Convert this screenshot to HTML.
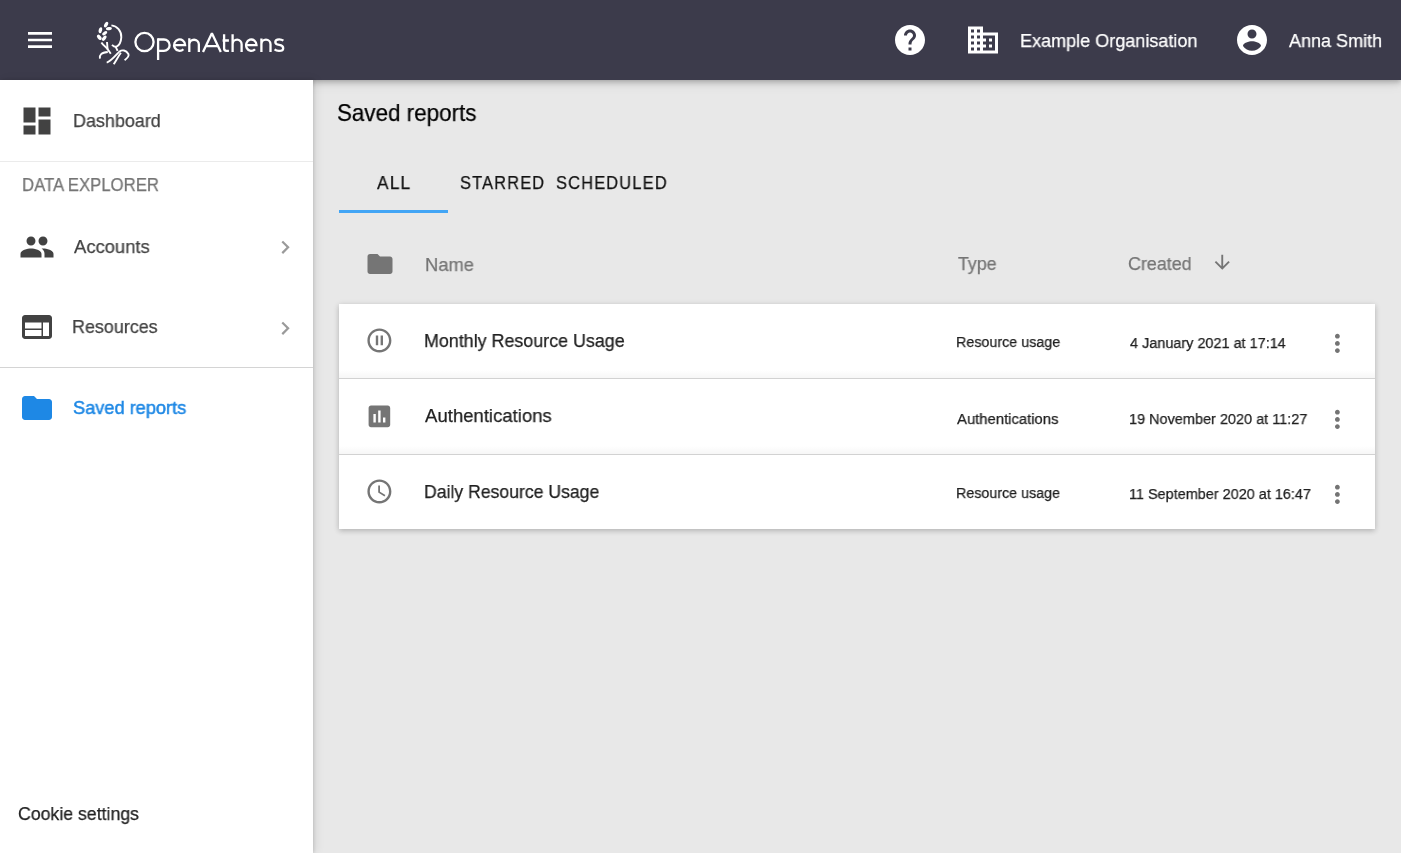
<!DOCTYPE html>
<html><head><meta charset="utf-8"><title>Saved reports</title>
<style>
html,body{margin:0;padding:0}
body{width:1401px;height:853px;overflow:hidden;position:relative;font-family:"Liberation Sans",sans-serif;background:#e8e8e8}
.t{position:absolute;white-space:nowrap;font-family:"Liberation Sans",sans-serif;transform-origin:0 0;will-change:transform}
.ab{position:absolute}
svg{display:block}
#main{position:absolute;left:313px;top:80px;width:1088px;height:773px;background:#e8e8e8}
#header{position:absolute;left:0;top:0;width:1401px;height:80px;background:#3c3b4b;box-shadow:0 2px 4px -1px rgba(0,0,0,.16),0 4px 5px 0 rgba(0,0,0,.1),0 2px 13px 0 rgba(0,0,0,.1)}
#sidebar{position:absolute;left:0;top:80px;width:313px;height:773px;background:#fff;box-shadow:1px 0 3px rgba(0,0,0,.12),3px 0 9px rgba(0,0,0,.08)}
#card{position:absolute;left:339px;top:304px;width:1036px;height:225px;background:#fff;box-shadow:0 2px 5px rgba(0,0,0,.16),0 1px 7px rgba(0,0,0,.09)}
.div{position:absolute;height:1px}
.rowsh{position:absolute;left:339px;width:1036px;height:8px;background:linear-gradient(rgba(0,0,0,0),rgba(0,0,0,.035))}
</style></head>
<body>
<div id="main"></div>
<div id="header"></div>
<div id="sidebar"></div>

<!-- header icons -->
<svg class="ab" style="left:24px;top:24px" width="32" height="32" viewBox="0 0 24 24"><path fill="#fff" d="M3 18h18v-2H3v2zm0-5h18v-2H3v2zm0-7v2h18V6H3z"/></svg>

<svg class="ab" style="left:90px;top:15px" width="200" height="55" viewBox="90 15 200 55">
 <g fill="#fff">
  <ellipse cx="106.1" cy="24.6" rx="1.7" ry="3.0" transform="rotate(30 106.1 24.6)"/>
  <ellipse cx="108.9" cy="28.7" rx="3.0" ry="1.6" transform="rotate(-8 108.9 28.7)"/>
  <ellipse cx="100.4" cy="30.2" rx="1.7" ry="3.1" transform="rotate(12 100.4 30.2)"/>
  <ellipse cx="104.7" cy="33.2" rx="2.9" ry="1.6" transform="rotate(-35 104.7 33.2)"/>
  <ellipse cx="99.3" cy="37.3" rx="1.8" ry="3.0" transform="rotate(-38 99.3 37.3)"/>
  <ellipse cx="104.2" cy="38.2" rx="1.7" ry="3.0" transform="rotate(38 104.2 38.2)"/>
 </g>
 <g fill="none" stroke="#fff" stroke-width="1.9" stroke-linecap="butt">
  <path d="M101.4 42.4 C103 45 105 46.5 106.7 48 L110.8 53.8"/>
  <path d="M107 42 L107.6 49.5"/>
  <path d="M99.9 58.6 C99.4 55 101 52.6 107.8 52"/>
  <path d="M111.4 25.4 C117 26 121.6 31 121.3 37.4 C121 42 119 45.5 116.5 46.6 C114.5 47.2 113 45.8 112 44.8"/>
  <path d="M115.6 46.6 L117.6 50.8"/>
  <path d="M106.7 62.6 C111 61.5 116 55 119.6 51.4 C122 49.6 126 50 128.4 54 C129.3 56 127 58.4 124.6 60.2"/>
  <path d="M113.7 64.3 C116 61 118.5 56 120.9 52.8"/>
 </g>
 <g fill="none" stroke="#fff" stroke-width="2.3">
  <ellipse cx="144.5" cy="42.05" rx="9.1" ry="9.15"/>
  <path d="M158.1 38.3 V60"/>
  <path d="M158.1 39.5 H163.95 A5.65 5.65 0 0 1 163.95 50.8 H158.1"/>
  <path d="M174.1 45.1 H185.1 A5.5 5.7 0 1 0 183.4 49.2"/>
  <path d="M189.3 52 V38.3 M189.3 44.3 A4.78 4.78 0 0 1 198.85 44.3 V52"/>
  <path stroke-linejoin="bevel" d="M203 52 L211.9 33.2 L220.8 52 M205.8 46.1 H218"/>
  <path d="M224.1 34.2 V48.6 Q224.1 50.85 226.4 50.85 H228.9 M222.6 40.5 H228.9"/>
  <path d="M232.6 34.2 V52 M232.6 44.2 A4.5 4.5 0 0 1 241.6 44.2 V52"/>
  <path d="M246.1 45.1 H256.5 A5.2 5.7 0 1 0 255 49.2"/>
  <path d="M261.4 52 V38.5 M261.4 44.2 A4.55 4.55 0 0 1 270.5 44.2 V52"/>
  <path d="M283.4 40.6 Q281.6 39.3 279.2 39.3 Q275.3 39.3 275.3 42 Q275.3 44.4 279.2 44.9 Q283.2 45.4 283.2 48.2 Q283.2 50.9 279 50.9 Q276.2 50.9 274.6 49.4"/>
 </g>
</svg>

<svg class="ab" style="left:891.5px;top:22px" width="36" height="36" viewBox="0 0 24 24"><path fill="#fff" d="M12 2C6.48 2 2 6.48 2 12s4.48 10 10 10 10-4.48 10-10S17.52 2 12 2zm1 17h-2v-2h2v2zm2.07-7.75l-.9.92C13.45 12.9 13 13.5 13 15h-2v-.5c0-1.1.45-2.1 1.17-2.83l1.240-1.26c.37-.36.59-.86.59-1.41 0-1.1-.9-2-2-2s-2 .9-2 2H8c0-2.21 1.79-4 4-4s4 1.79 4 4c0 .88-.36 1.68-.93 2.25z"/></svg>

<svg class="ab" style="left:965px;top:22px" width="36" height="36" viewBox="0 0 24 24"><path fill="#fff" d="M12 7V3H2v18h20V7H12zM6 19H4v-2h2v2zm0-4H4v-2h2v2zm0-4H4V9h2v2zm0-4H4V5h2v2zm4 12H8v-2h2v2zm0-4H8v-2h2v2zm0-4H8V9h2v2zm0-4H8V5h2v2zm10 12h-8v-2h2v-2h-2v-2h2v-2h-2V9h8v10zm-2-8h-2v2h2v-2zm0 4h-2v2h2v-2z"/></svg>

<svg class="ab" style="left:1234.2px;top:22px" width="36" height="36" viewBox="0 0 24 24"><path fill="#fff" d="M12 2C6.48 2 2 6.48 2 12s4.48 10 10 10 10-4.48 10-10S17.52 2 12 2zm0 3c1.66 0 3 1.34 3 3s-1.34 3-3 3-3-1.34-3-3 1.34-3 3-3zm0 14.2c-2.5 0-4.71-1.28-6-3.22.03-1.99 4-3.08 6-3.08 1.99 0 5.97 1.09 6 3.08-1.29 1.940-3.5 3.22-6 3.22z"/></svg>

<!-- sidebar -->
<svg class="ab" style="left:18.7px;top:103px" width="36" height="36" viewBox="0 0 24 24"><path fill="#424242" d="M3 13h8V3H3v10zm0 8h8v-6H3v6zm10 0h8V11h-8v10zm0-18v6h8V3h-8z"/></svg>
<div class="div" style="left:0;top:161px;width:313px;background:#ebebeb"></div>
<svg class="ab" style="left:18.5px;top:229px" width="36" height="36" viewBox="0 0 24 24"><path fill="#424242" d="M16 11c1.66 0 2.99-1.34 2.99-3S17.66 5 16 5c-1.66 0-3 1.34-3 3s1.34 3 3 3zm-8 0c1.66 0 2.99-1.34 2.99-3S9.66 5 8 5C6.34 5 5 6.34 5 8s1.34 3 3 3zm0 2c-2.33 0-7 1.17-7 3.5V19h14v-2.5c0-2.330-4.67-3.5-7-3.5zm8 0c-.29 0-.62.02-.97.05 1.16.84 1.97 1.97 1.97 3.45V19h6v-2.5c0-2.33-4.67-3.5-7-3.5z"/></svg>
<svg class="ab" style="left:272.2px;top:234.05px" width="26.5" height="26.5" viewBox="0 0 24 24"><path fill="#9a9a9a" d="M10 6L8.59 7.41 13.17 12l-4.58 4.59L10 18l6-6z"/></svg>
<svg class="ab" style="left:18.8px;top:308.9px" width="36" height="36" viewBox="0 0 24 24"><path fill="#424242" d="M20 4H4c-1.1 0-1.99.9-1.99 2L2 18c0 1.1.9 2 2 2h16c1.1 0 2-.9 2-2V6c0-1.1-.9-2-2-2zm-5 14H4v-4h11v4zm0-5H4V9h11v4zm5 5h-4V9h4v9z"/></svg>
<svg class="ab" style="left:272.2px;top:314.65px" width="26.5" height="26.5" viewBox="0 0 24 24"><path fill="#9a9a9a" d="M10 6L8.59 7.41 13.17 12l-4.58 4.59L10 18l6-6z"/></svg>
<div class="div" style="left:0;top:367px;width:313px;background:#d4d4d4"></div>
<svg class="ab" style="left:18.8px;top:390px" width="36" height="36" viewBox="0 0 24 24"><path fill="#1e88e5" d="M10 4H4c-1.1 0-1.99.9-1.99 2L2 18c0 1.1.9 2 2 2h16c1.1 0 2-.9 2-2V8c0-1.1-.9-2-2-2h-8l-2-2z"/></svg>

<!-- main -->
<div class="ab" style="left:339px;top:210px;width:109px;height:3px;background:#42a5f5"></div>
<svg class="ab" style="left:365.1px;top:249px" width="30" height="30" viewBox="0 0 24 24"><path fill="#757575" d="M10 4H4c-1.1 0-1.99.9-1.99 2L2 18c0 1.1.9 2 2 2h16c1.1 0 2-.9 2-2V8c0-1.1-.9-2-2-2h-8l-2-2z"/></svg>
<svg class="ab" style="left:1211px;top:251.25px" width="22.5" height="22.5" viewBox="0 0 24 24"><path fill="#757575" d="M20 12l-1.41-1.41L13 16.17V4h-2v12.170l-5.58-5.59L4 12l8 8 8-8z"/></svg>

<div id="card"></div>
<div class="rowsh" style="top:370px"></div>
<div class="div" style="left:339px;top:378px;width:1036px;background:#d2d2d2"></div>
<div class="rowsh" style="top:446px"></div>
<div class="div" style="left:339px;top:454px;width:1036px;background:#d2d2d2"></div>

<svg class="ab" style="left:365.1px;top:325.95px" width="28.8" height="28.8" viewBox="0 0 24 24"><path fill="#757575" d="M9 16h2V8H9v8zm3-14C6.48 2 2 6.48 2 12s4.48 10 10 10 10-4.48 10-10S17.52 2 12 2zm0 18c-4.41 0-8-3.59-8-8s3.59-8 8-8 8 3.59 8 8-3.59 8-8 8zm1-4h2V8h-2v8z"/></svg>
<svg class="ab" style="left:365.1px;top:401.95px" width="28.8" height="28.8" viewBox="0 0 24 24"><path fill="#757575" d="M19 3H5c-1.1 0-2 .9-2 2v14c0 1.1.9 2 2 2h14c1.1 0 2-.9 2-2V5c0-1.1-.9-2-2-2zM9 17H7v-7h2v7zm4 0h-2V7h2v10zm4 0h-2v-4h2v4z"/></svg>
<svg class="ab" style="left:365.1px;top:476.95px" width="28.8" height="28.8" viewBox="0 0 24 24"><path fill="#757575" d="M11.99 2C6.47 2 2 6.48 2 12s4.47 10 9.99 10C17.52 22 22 17.52 22 12S17.52 2 11.99 2zM12 20c-4.420 0-8-3.58-8-8s3.58-8 8-8 8 3.58 8 8-3.58 8-8 8zm.5-13H11v6l5.25 3.15.75-1.23-4.5-2.67z"/></svg>

<svg class="ab" style="left:1323.1px;top:329.0px" width="28.8" height="28.8" viewBox="0 0 24 24"><path fill="#747474" d="M12 8c1.1 0 2-.9 2-2s-.9-2-2-2-2 .9-2 2 .9 2 2 2zm0 2c-1.1 0-2 .9-2 2s.9 2 2 2 2-.9 2-2-.9-2-2-2zm0 6c-1.1 0-2 .9-2 2s.9 2 2 2 2-.9 2-2-.9-2-2-2z"/></svg>
<svg class="ab" style="left:1323.1px;top:405.15px" width="28.8" height="28.8" viewBox="0 0 24 24"><path fill="#747474" d="M12 8c1.1 0 2-.9 2-2s-.9-2-2-2-2 .9-2 2 .9 2 2 2zm0 2c-1.1 0-2 .9-2 2s.9 2 2 2 2-.9 2-2-.9-2-2-2zm0 6c-1.1 0-2 .9-2 2s.9 2 2 2 2-.9 2-2-.9-2-2-2z"/></svg>
<svg class="ab" style="left:1323.1px;top:480.05px" width="28.8" height="28.8" viewBox="0 0 24 24"><path fill="#747474" d="M12 8c1.1 0 2-.9 2-2s-.9-2-2-2-2 .9-2 2 .9 2 2 2zm0 2c-1.1 0-2 .9-2 2s.9 2 2 2 2-.9 2-2-.9-2-2-2zm0 6c-1.1 0-2 .9-2 2s.9 2 2 2 2-.9 2-2-.9-2-2-2z"/></svg>

<div class="t" style="left:1020px;top:32px;font-size:18.6px;line-height:18.6px;letter-spacing:0px;color:#ffffff;transform:matrix(0.9703,0,0,1,0.00,0.00);-webkit-text-stroke:0.25px #ffffff;">Example Organisation</div>
<div class="t" style="left:1289px;top:32px;font-size:18.6px;line-height:18.6px;letter-spacing:0px;color:#ffffff;transform:matrix(0.9690,0,0,1,0.00,0.00);-webkit-text-stroke:0.25px #ffffff;">Anna Smith</div>
<div class="t" style="left:73px;top:112px;font-size:18.6px;line-height:18.6px;letter-spacing:0px;color:#424242;transform:matrix(0.9655,0,0,1,0.00,0.00);-webkit-text-stroke:0.25px #424242;">Dashboard</div>
<div class="t" style="left:22px;top:176px;font-size:18.2px;line-height:18.2px;letter-spacing:0px;color:#757575;transform:matrix(0.9199,0,0,1,0.00,0.00);-webkit-text-stroke:0.25px #757575;">DATA EXPLORER</div>
<div class="t" style="left:74px;top:238px;font-size:18.6px;line-height:18.6px;letter-spacing:0px;color:#424242;transform:matrix(0.9900,0,0,1,0.00,0.00);-webkit-text-stroke:0.25px #424242;">Accounts</div>
<div class="t" style="left:72px;top:318px;font-size:18.6px;line-height:18.6px;letter-spacing:0px;color:#424242;transform:matrix(0.9637,0,0,1,0.00,0.00);-webkit-text-stroke:0.25px #424242;">Resources</div>
<div class="t" style="left:73px;top:399px;font-size:18.6px;line-height:18.6px;letter-spacing:0px;color:#1e88e5;transform:matrix(0.9778,0,0,1,0.00,0.00);-webkit-text-stroke:0.5px #1e88e5;">Saved reports</div>
<div class="t" style="left:18px;top:805px;font-size:18.6px;line-height:18.6px;letter-spacing:0px;color:#212121;transform:matrix(0.9517,0,0,1,0.00,0.00);-webkit-text-stroke:0.25px #212121;">Cookie settings</div>
<div class="t" style="left:337px;top:101px;font-size:23.8px;line-height:23.8px;letter-spacing:0px;color:#000000;transform:matrix(0.9410,0,0,1,0.00,0.00);-webkit-text-stroke:0.25px #000000;">Saved reports</div>
<div class="t" style="left:377px;top:174px;font-size:18.6px;line-height:18.6px;letter-spacing:1.3px;color:#111111;transform:matrix(0.9305,0,0,1,0.00,0.00);-webkit-text-stroke:0.25px #111111;">ALL</div>
<div class="t" style="left:460px;top:174px;font-size:18.6px;line-height:18.6px;letter-spacing:1.3px;color:#111111;transform:matrix(0.8828,0,0,1,0.00,0.00);-webkit-text-stroke:0.25px #111111;">STARRED</div>
<div class="t" style="left:556px;top:174px;font-size:18.6px;line-height:18.6px;letter-spacing:1.3px;color:#111111;transform:matrix(0.8841,0,0,1,0.00,0.00);-webkit-text-stroke:0.25px #111111;">SCHEDULED</div>
<div class="t" style="left:425px;top:256px;font-size:18.6px;line-height:18.6px;letter-spacing:0px;color:#757575;transform:matrix(0.9866,0,0,1,0.00,0.00);-webkit-text-stroke:0.25px #757575;">Name</div>
<div class="t" style="left:958px;top:255px;font-size:18.6px;line-height:18.6px;letter-spacing:0px;color:#757575;transform:matrix(0.9557,0,0,1,0.00,0.00);-webkit-text-stroke:0.25px #757575;">Type</div>
<div class="t" style="left:1128px;top:255px;font-size:18.6px;line-height:18.6px;letter-spacing:0px;color:#757575;transform:matrix(0.9616,0,0,1,0.00,0.00);-webkit-text-stroke:0.25px #757575;">Created</div>
<div class="t" style="left:424px;top:332px;font-size:18.6px;line-height:18.6px;letter-spacing:0px;color:#212121;transform:matrix(0.9611,0,0,1,0.00,0.00);-webkit-text-stroke:0.25px #212121;">Monthly Resource Usage</div>
<div class="t" style="left:425px;top:407px;font-size:18.6px;line-height:18.6px;letter-spacing:0px;color:#212121;transform:matrix(0.9970,0,0,1,0.00,0.00);-webkit-text-stroke:0.25px #212121;">Authentications</div>
<div class="t" style="left:424px;top:483px;font-size:18.6px;line-height:18.6px;letter-spacing:0px;color:#212121;transform:matrix(0.9472,0,0,1,0.00,0.00);-webkit-text-stroke:0.25px #212121;">Daily Resource Usage</div>
<div class="t" style="left:956px;top:334px;font-size:15.2px;line-height:15.2px;letter-spacing:0px;color:#212121;transform:matrix(0.9416,0,0,1,0.00,0.00);-webkit-text-stroke:0.25px #212121;">Resource usage</div>
<div class="t" style="left:957px;top:411px;font-size:15.2px;line-height:15.2px;letter-spacing:0px;color:#212121;transform:matrix(0.9770,0,0,1,0.00,0.00);-webkit-text-stroke:0.25px #212121;">Authentications</div>
<div class="t" style="left:956px;top:485px;font-size:15.2px;line-height:15.2px;letter-spacing:0px;color:#212121;transform:matrix(0.9396,0,0,1,0.00,0.00);-webkit-text-stroke:0.25px #212121;">Resource usage</div>
<div class="t" style="left:1130px;top:335px;font-size:15.2px;line-height:15.2px;letter-spacing:0px;color:#212121;transform:matrix(0.9510,0,0,1,0.00,0.00);-webkit-text-stroke:0.25px #212121;">4 January 2021 at 17:14</div>
<div class="t" style="left:1129px;top:411px;font-size:15.2px;line-height:15.2px;letter-spacing:0px;color:#212121;transform:matrix(0.9530,0,0,1,0.00,0.00);-webkit-text-stroke:0.25px #212121;">19 November 2020 at 11:27</div>
<div class="t" style="left:1129px;top:486px;font-size:15.2px;line-height:15.2px;letter-spacing:0px;color:#212121;transform:matrix(0.9506,0,0,1,0.00,0.00);-webkit-text-stroke:0.25px #212121;">11 September 2020 at 16:47</div>
</body></html>
